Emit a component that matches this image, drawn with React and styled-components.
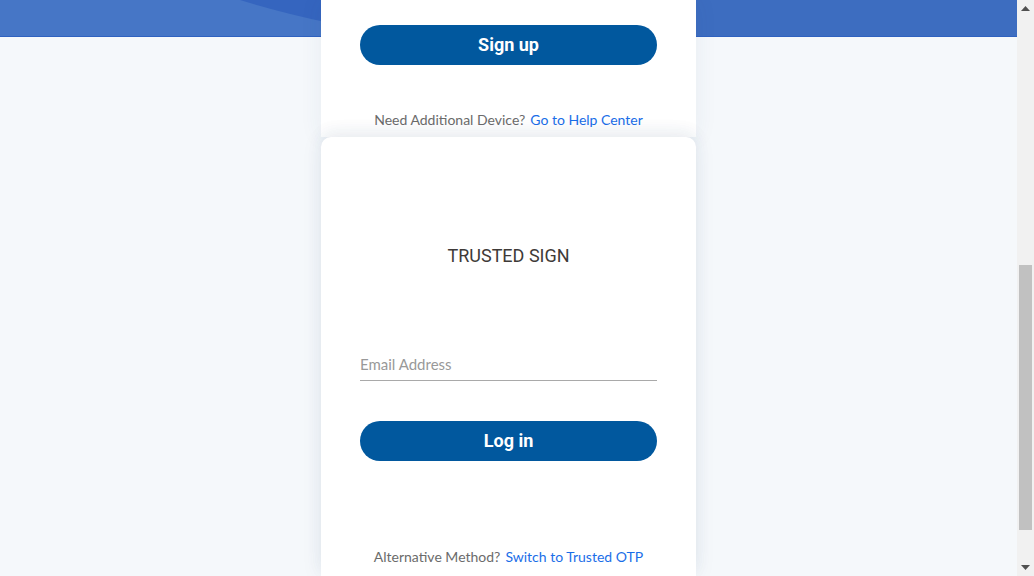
import styled, { createGlobalStyle } from 'styled-components';

const GlobalStyle = createGlobalStyle`
* { box-sizing: border-box; }
body {
    margin: 0;
    background: #f5f8fb;
    overflow: hidden;
    font-family: "Lato", "Liberation Sans", sans-serif;
}
`

const Page = styled.div`
display: flex;
height: 576px;
width: 1034px;
`

const Main = styled.div`
position: relative;
flex: 1;
display: flex;
justify-content: center;
overflow: hidden;
`

const HeaderBand = styled.div`
position: absolute;
top: 0;
left: 0;
right: 0;
height: 37px;
background: #4676c6;
border-bottom: 1px solid #2f62c0;
overflow: hidden;
& svg {
    position: absolute;
    top: 0;
    left: 0;
}
`

const Column = styled.div`
position: relative;
width: 375px;
display: flex;
flex-direction: column;
`

const TopCard = styled.div`
background: #fff;
height: 137px;
padding: 25px 39px 0;
display: flex;
flex-direction: column;
box-shadow: 0 0 22px rgba(40, 70, 110, 0.07);
`

const MainCard = styled.div`
flex: 1;
background: #fff;
border-radius: 10px 10px 0 0;
padding: 0 39px;
display: flex;
flex-direction: column;
box-shadow: 0 -6px 16px rgba(40, 70, 110, 0.06), 0 0 22px rgba(40, 70, 110, 0.07);
`

const PillButton = styled.button`
width: 100%;
height: 40px;
border: none;
border-radius: 20px;
background: #01589e;
color: #fff;
font-family: Roboto, "Liberation Sans", sans-serif;
font-weight: 700;
font-size: 18px;
padding: 0 0 2px;
cursor: pointer;
margin-top: ${p => p.$top || 0}px;
`

const HelpLine = styled.p`
margin: ${p => p.$top}px -20px 0;
text-align: center;
font-size: 14px;
line-height: 18px;
color: #6b6b6b;
`

const HelpLink = styled.a`
color: #1a6ee8;
text-decoration: none;
margin-left: 5px;
`

const Title = styled.h2`
margin: 107px 0 0;
text-align: center;
font-family: Roboto, "Liberation Sans", sans-serif;
font-weight: 400;
font-size: 18px;
line-height: 24px;
color: #3e3a38;
`

const EmailInput = styled.input`
margin-top: 79px;
width: 100%;
height: 34px;
border: none;
border-bottom: 1px solid #a9a9a9;
padding: 0;
font-family: inherit;
font-size: 15px;
color: #333;
outline: none;
background: transparent;
&::placeholder {
    color: #999;
}
`

const Scrollbar = styled.div`
width: 17px;
background: #f1f1f1;
display: flex;
flex-direction: column;
align-items: center;
`

const Arrow = styled.div`
height: 17px;
display: flex;
align-items: center;
justify-content: center;
`

const Track = styled.div`
flex: 1;
width: 100%;
padding: 248px 2px 29px;
display: flex;
`

const Thumb = styled.div`
flex: 1;
background: #c1c1c1;
`

const App = () => {
    return (
        <Page>
            <GlobalStyle />
            <Main>
                <HeaderBand>
                    <svg width="1017" height="36" viewBox="0 0 1017 36">
                        <path d="M240 0 Q 282 13, 330 23 L 1017 23 L 1017 0 Z" fill="#3565bf" />
                        <rect x="696" y="0" width="321" height="36" fill="#3d6dc0" />
                    </svg>
                </HeaderBand>
                <Column>
                    <TopCard>
                        <PillButton type="button">Sign up</PillButton>
                        <HelpLine $top={46}>
                            Need Additional Device?
                            <HelpLink href="#">Go to Help Center</HelpLink>
                        </HelpLine>
                    </TopCard>
                    <MainCard>
                        <Title>TRUSTED SIGN</Title>
                        <EmailInput type="email" placeholder="Email Address" />
                        <PillButton type="button" $top={40}>Log in</PillButton>
                        <HelpLine $top={87}>
                            Alternative Method?
                            <HelpLink href="#">Switch to Trusted OTP</HelpLink>
                        </HelpLine>
                    </MainCard>
                </Column>
            </Main>
            <Scrollbar>
                <Arrow>
                    <svg width="9" height="5" viewBox="0 0 9 5"><path d="M0 5 L4.5 0 L9 5 Z" fill="#505050" /></svg>
                </Arrow>
                <Track><Thumb /></Track>
                <Arrow>
                    <svg width="9" height="5" viewBox="0 0 9 5"><path d="M0 0 L4.5 5 L9 0 Z" fill="#505050" /></svg>
                </Arrow>
            </Scrollbar>
        </Page>
    );
};

export default App;
